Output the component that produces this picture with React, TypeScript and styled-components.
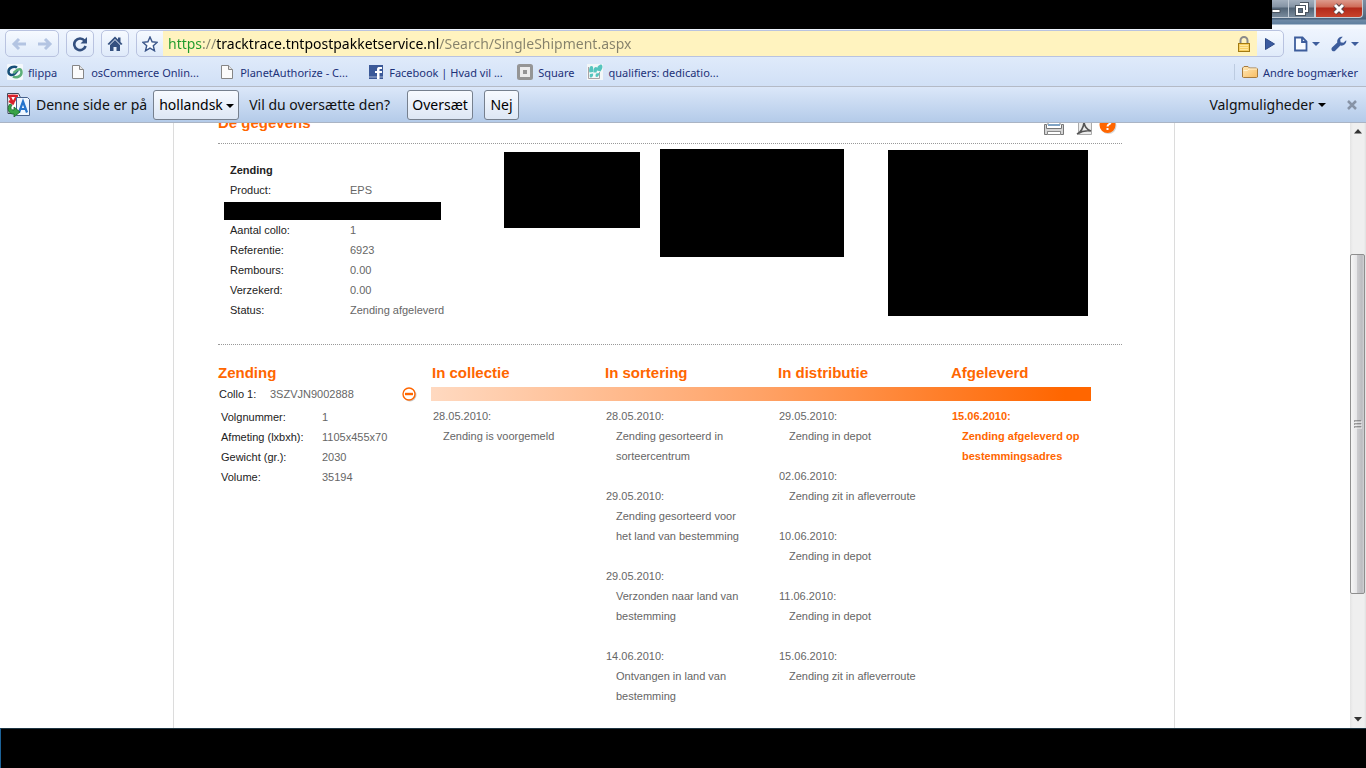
import React from "react";
import styled, { createGlobalStyle } from "styled-components";

const ui = `"Noto Sans", "Open Sans", sans-serif`;
const page = `"Liberation Sans", Arial, sans-serif`;

const Global = createGlobalStyle`
  * { box-sizing: border-box; }
  body { margin: 0; background: #fff; font-family: ${page}; }
  button, input, select { font: inherit; margin: 0; }
  h2, h3, ul, p { margin: 0; padding: 0; }
  ul { list-style: none; }
`;

const Window = styled.div`
  display: flex;
  flex-direction: column;
  min-height: 100vh;
`;

/* ---------- title strip ---------- */
const TitleStrip = styled.header`
  display: flex;
  flex-shrink: 0;
  height: 29px;
  background: #000;
`;
const TitleFill = styled.div`
  flex: 1;
`;
const Caption = styled.div`
  display: flex;
  align-items: flex-start;
  width: 94px;
  padding-right: 3px;
  background: linear-gradient(#7d8ea3 0, #5d7186 14px, #47617b 19px, #6f8aa6 20px, #5f7f9f 24px, #f3f8fe 25px);
`;
const CaptionButton = styled.button<{ $w: number; $close?: boolean }>`
  display: flex;
  align-items: center;
  justify-content: center;
  width: ${(p) => p.$w}px;
  height: 18px;
  padding: 0;
  border: 1px solid #c3ccd6;
  border-top: 0;
  border-left-width: ${(p) => (p.$close ? 1 : 0)}px;
  border-radius: 0 0 ${(p) => (p.$close ? 4 : 0)}px 0;
  background: ${(p) =>
    p.$close
      ? "linear-gradient(#dd9a8c 0, #cf6b58 7px, #b2291a 8px, #c8432c 17px)"
      : "linear-gradient(#a3afbd 0, #8493a4 7px, #516375 8px, #788a9c 17px)"};
`;

/* ---------- toolbar ---------- */
const Toolbar = styled.nav`
  display: flex;
  flex-shrink: 0;
  align-items: center;
  gap: 7px;
  height: 29px;
  padding: 0 8px 0 5px;
  background: linear-gradient(#eff5fe, #e0ebfa);
`;
const ButtonBox = styled.div`
  display: flex;
  height: 27px;
  border: 1px solid #b9c3e0;
  border-radius: 5px;
  background: linear-gradient(#f6faff, #dfeafa);
`;
const ToolButton = styled.button<{ $w?: number }>`
  display: flex;
  align-items: center;
  justify-content: center;
  gap: 4px;
  width: ${(p) => p.$w ?? 26}px;
  padding: 0;
  border: 0;
  background: none;
`;
const AddressBox = styled(ButtonBox)`
  flex: 1;
  overflow: hidden;
`;
const AddressField = styled.label`
  display: flex;
  flex: 1;
  align-items: center;
  padding: 0 6px 0 5px;
  background: #fff3bf;
`;
const AddressInput = styled.input`
  flex: 1;
  min-width: 0;
  height: 25px;
  padding: 0;
  border: 0;
  outline: 0;
  font-family: ${ui};
  font-size: 14px;
  color: transparent;
  background: linear-gradient(90deg, #1e9a2c 0 35px, #85816b 35px 48px, #000 48px 271px, #85816b 271px);
  background-clip: text;
  -webkit-background-clip: text;
`;
const MenuTools = styled.div`
  display: flex;
  gap: 12px;
  padding-left: 3px;
`;

/* ---------- bookmarks ---------- */
const Bookmarks = styled.nav`
  display: flex;
  flex-shrink: 0;
  align-items: center;
  gap: 13px;
  height: 28px;
  padding: 0 8px 0 7px;
  background: linear-gradient(#dfeafa, #d1e0f6);
  font-family: ${ui};
  font-size: 11px;
`;
const Bookmark = styled.a`
  display: flex;
  align-items: center;
  gap: 5px;
  color: #1c3178;
  text-decoration: none;
  white-space: nowrap;
`;
const BookmarkLabel = styled.span<{ $long?: boolean }>`
  min-width: ${(p) => (p.$long ? 115 : 0)}px;
`;
const OtherBookmarks = styled(Bookmark)`
  margin-left: auto;
  padding-left: 7px;
  border-left: 1px solid #bccbe0;
`;

/* ---------- translate bar ---------- */
const TranslateBar = styled.section`
  display: flex;
  flex-shrink: 0;
  align-items: center;
  height: 37px;
  padding: 0 8px 0 6px;
  border-top: 1px solid #b4bac6;
  border-bottom: 1px solid #aab4c4;
  background: linear-gradient(#dbe7f9, #b4cbe9);
  font-family: ${ui};
  font-size: 14px;
  color: #111;
  white-space: nowrap;
`;
const Prompt = styled.label`
  margin: 0 6px;
`;
const barControl = `
  height: 30px;
  border: 1px solid #76808e;
  border-radius: 3px;
  background: linear-gradient(#f7faff, #dde7f5);
  color: #000;
`;
const BarButton = styled.button<{ $w: number }>`
  ${barControl}
  width: ${(p) => p.$w}px;
  margin-left: 11px;
  padding: 0;
`;
const SelectWrap = styled.span`
  position: relative;
  display: flex;
  margin-right: 4px;
`;
const Language = styled.select`
  ${barControl}
  width: 86px;
  padding: 0 0 0 5px;
  appearance: none;
`;
const SelectArrow = styled.span`
  position: absolute;
  right: 5px;
  top: 14px;
  border: 4px solid transparent;
  border-top-color: #000;
  border-bottom: 0;
  pointer-events: none;
`;
const Options = styled.button`
  display: flex;
  align-items: center;
  gap: 4px;
  margin-left: auto;
  padding: 0;
  border: 0;
  background: none;
  color: #111;
`;
const Caret = styled.span<{ $color?: string }>`
  border: 4px solid transparent;
  border-top-color: ${(p) => p.$color ?? "#000"};
  border-bottom: 0;
`;
const Dismiss = styled.button`
  display: flex;
  margin-left: 20px;
  padding: 0;
  border: 0;
  background: none;
`;

/* ---------- page ---------- */
const Viewport = styled.div`
  display: flex;
  flex: 1;
  overflow: hidden;
`;
const Canvas = styled.div`
  flex: 1;
  padding-right: 2px;
  display: flex;
  justify-content: center;
`;
const Sheet = styled.main`
  width: 100%;
  max-width: 1002px;
  padding: 0 52px 0 44px;
  border: solid #dcdcdc;
  border-width: 0 1px;
  font-size: 11px;
  line-height: 20px;
  color: #666;
`;
const SheetHead = styled.div`
  display: flex;
  justify-content: space-between;
  height: 21px;
  border-bottom: 1px dotted #999;
`;
const Heading = styled.h2`
  font-size: 15px;
  line-height: 20px;
  color: #f60;
`;
const ScrolledHeading = styled(Heading)`
  margin-top: -10px;
`;
const PhaseHeading = styled(Heading)`
  height: 20px;
`;
const Tools = styled.div`
  display: flex;
  gap: 6px;
  margin: -6px 5px 0 0;
`;
const ToolLink = styled.a`
  display: flex;
  align-items: flex-start;
  height: 20px;
`;
const Details = styled.section`
  display: flex;
  align-items: flex-start;
  height: 201px;
  padding-top: 5px;
  border-bottom: 1px dotted #999;
`;
const DataTable = styled.table<{ $label: number }>`
  border-collapse: collapse;
  text-align: left;
  th, td { padding: 0; height: 20px; }
  th { width: ${(p) => p.$label}px; font-weight: normal; color: #222; }
  caption { text-align: left; font-weight: bold; color: #222; }
`;
const ShipmentTable = styled(DataTable)`
  width: 268px;
  margin: 11px 0 0 12px;
`;
const Redacted = styled.div<{ $w: number; $h: number; $top?: number; $left?: number }>`
  width: ${(p) => p.$w}px;
  height: ${(p) => p.$h}px;
  margin: ${(p) => p.$top ?? 0}px 0 0 ${(p) => p.$left ?? 0}px;
  background: #000;
`;
const Progress = styled.section`
  display: flex;
  gap: 14px;
  padding-top: 18px;
`;
const Collo = styled.div`
  width: 199px;
`;
const ColloRow = styled.div`
  display: flex;
  align-items: center;
  height: 22px;
  color: #666;
`;
const ColloLabel = styled.span`
  width: 52px;
  padding-left: 1px;
  color: #222;
`;
const Toggle = styled.button`
  display: flex;
  margin-left: auto;
  padding: 0;
  border: 0;
  background: none;
`;
const ColloTable = styled(DataTable)`
  margin: 2px 0 0 3px;
`;
const Phases = styled.div`
  display: grid;
  grid-template-columns: repeat(4, 173px);
  grid-template-rows: auto 14px auto;
  width: 660px;
`;
const PhaseTitle = styled(Heading)`
  height: 24px;
  padding-left: 1px;
`;
const Bar = styled.div`
  grid-column: 1 / -1;
  width: 660px;
  background: linear-gradient(90deg, #ffd9c0, #ffa266 50%, #f60 96%);
`;
const Events = styled.ul<{ $done?: boolean }>`
  padding: 5px 0 0 2px;
  color: ${(p) => (p.$done ? "#f60" : "#666")};
  font-weight: ${(p) => (p.$done ? "bold" : "normal")};
`;
const Event = styled.li`
  margin-bottom: 20px;
`;
const EventText = styled.p`
  width: 146px;
  padding-left: 10px;
`;

/* ---------- scrollbar ---------- */
const Scrollbar = styled.div`
  display: flex;
  flex-direction: column;
  width: 16px;
  background: linear-gradient(90deg, #e4e4e4, #efefef 3px, #efefef 14px, #e0e0e0);
`;
const ScrollArrow = styled.button`
  display: flex;
  align-items: center;
  justify-content: center;
  height: 17px;
  padding: 0;
  border: 0;
  background: none;
`;
const Gap = styled.div<{ $grow: number }>`
  flex: ${(p) => p.$grow} 1 0;
`;
const Thumb = styled.div`
  display: flex;
  flex: 340 1 0;
  align-items: center;
  justify-content: center;
  width: 15px;
  border: 1px solid #8e8e8e;
  border-radius: 2px;
  background: linear-gradient(90deg, #f6f6f6, #e6e6e8 45%, #cbcbce 50%, #bcbcc0 85%, #d4d4d6);
`;

const Taskbar = styled.footer`
  flex-shrink: 0;
  height: 40px;
  border-top: 1px solid #1d3442;
  border-left: 1px solid #1c6298;
  background: #000;
`;

const RedactedRow = styled.div`
  width: 217px;
  height: 18px;
  margin: 2px 0 0 -6px;
  background: #000;
`;

const PageIcon = () => (
  <svg width="16" height="16" viewBox="0 0 16 16" aria-hidden="true">
    <path d="M2.500 1.500h7l4 4v9h-11z" fill="#fbfbfb" stroke="#868686" />
    <path d="M9.500 1.500v4h4" fill="#e4e4e4" stroke="#868686" />
  </svg>
);

const FlippaIcon = () => (
  <svg width="16" height="16" viewBox="0 0 16 16" aria-hidden="true">
    <rect width="16" height="16" rx="1" fill="#f4f8fc" />
    <path d="M10 3.500C7 1.500 1.500 3.500 1.500 7.500S6 12 8 9.500L11 6" fill="none" stroke="#164f78" strokeWidth="2.500" />
    <path d="M6 12.500c3 2 8.500 0 8.500-4S11.500 4.500 9.500 6.500L6.500 9" fill="none" stroke="#5cae78" strokeWidth="2.500" />
  </svg>
);

const FacebookIcon = () => (
  <svg width="16" height="16" viewBox="0 0 16 16" aria-hidden="true">
    <rect x="1" y="1" width="14" height="14" fill="#3b5998" />
    <path d="M1 12h14v2H1z" fill="#7187b5" />
    <path d="M9 15V9H7V7h2V5.500C9 3.500 10 3 11.500 3H14v2h-1.500C11.500 5 11.500 5.300 11.500 6v1H14v2h-2.500v6z" fill="#fff" />
  </svg>
);

const SquareIcon = () => (
  <svg width="16" height="16" viewBox="0 0 16 16" aria-hidden="true">
    <rect x="1.500" y="1.500" width="13" height="13" rx="1" fill="#ececec" stroke="#959595" strokeWidth="3" />
    <rect x="6" y="6" width="4" height="4" fill="#959595" />
  </svg>
);

const SneakerIcon = () => (
  <svg width="16" height="16" viewBox="0 0 16 16" aria-hidden="true">
    <rect width="16" height="16" fill="#f3f7f8" />
    <path d="M1.500 3v11.500h11V8" stroke="#a9a3a6" fill="none" />
    <path d="M4.500 2C2.500 2 1.500 6 2.500 8.500l3.500-.5C6 6 7 2 4.500 2zM9 3C7 3 6 6 6.500 8.500l3 0C10 6.500 11 3 9 3zM3 10l3-.5c.5 2-.5 4-2 4s-1.500-2-1-3.500zM14.500.5c-3 0-5 3-4.500 6l3.500 1c1.500-2 3-5 1-7zM9 9.500l3.500-.5c0 2-1.500 4-3 4s-1-2-.5-3.500z" fill="#56c5be" />
  </svg>
);

const FolderIcon = () => (
  <svg width="16" height="16" viewBox="0 0 16 16" aria-hidden="true">
    <defs>
      <linearGradient id="folder" x1="0" y1="0" x2="1" y2="1">
        <stop offset="0" stopColor="#ffe9b8" />
        <stop offset="1" stopColor="#f8bc62" />
      </linearGradient>
    </defs>
    <path d="M.5 13V4L2 2.500h4L7.500 4h7l1 1v8l-1 .5h-13z" fill="url(#folder)" stroke="#a67a3e" />
    <path d="M1.500 6.500h4L7 5h8" fill="none" stroke="#fff2d2" />
  </svg>
);

const TranslateIcon = () => (
  <svg width="24" height="24" viewBox="0 0 24 24" aria-hidden="true">
    <path d="M1.500.5h11l1.500 3v12l-2 5H2z" fill="#fff" stroke="#3d4658" />
    <path d="M2 3c4-.5 6-.5 10 0M4 4l3 6 4-7M3 8l5 3" fill="none" stroke="#d8202a" strokeWidth="2.400" />
    <path d="M10.500 4.500h11l2 2v16h-13z" fill="#eef6ff" stroke="#46618d" />
    <path d="M13 19.500l4-11 4 11M14.500 16h5" fill="none" stroke="#2574cc" strokeWidth="2.200" />
    <path d="M4 11c-4 4-1 11 4 10v3l6-5-6-5v3c-3 0-4-2-2-5z" fill="#38a346" stroke="#14642a" strokeWidth=".8" />
  </svg>
);

type PhaseEvent = [date: string, text: string];
const phases: { title: string; done?: boolean; events: PhaseEvent[] }[] = [
  { title: "In collectie", events: [["28.05.2010:", "Zending is voorgemeld"]] },
  {
    title: "In sortering",
    events: [
      ["28.05.2010:", "Zending gesorteerd in sorteercentrum"],
      ["29.05.2010:", "Zending gesorteerd voor het land van bestemming"],
      ["29.05.2010:", "Verzonden naar land van bestemming"],
      ["14.06.2010:", "Ontvangen in land van bestemming"],
    ],
  },
  {
    title: "In distributie",
    events: [
      ["29.05.2010:", "Zending in depot"],
      ["02.06.2010:", "Zending zit in afleverroute"],
      ["10.06.2010:", "Zending in depot"],
      ["11.06.2010:", "Zending in depot"],
      ["15.06.2010:", "Zending zit in afleverroute"],
    ],
  },
  { title: "Afgeleverd", done: true, events: [["15.06.2010:", "Zending afgeleverd op bestemmingsadres"]] },
];

const shipmentRest = [
  ["Aantal collo:", "1"],
  ["Referentie:", "6923"],
  ["Rembours:", "0.00"],
  ["Verzekerd:", "0.00"],
  ["Status:", "Zending afgeleverd"],
];

const colloRows = [
  ["Volgnummer:", "1"],
  ["Afmeting (lxbxh):", "1105x455x70"],
  ["Gewicht (gr.):", "2030"],
  ["Volume:", "35194"],
];

const bookmarks = [
  { icon: <FlippaIcon />, label: "flippa" },
  { icon: <PageIcon />, label: "osCommerce Onlin...", long: true },
  { icon: <PageIcon />, label: "PlanetAuthorize - C...", long: true },
  { icon: <FacebookIcon />, label: "Facebook | Hvad vil ...", long: true },
  { icon: <SquareIcon />, label: "Square" },
  { icon: <SneakerIcon />, label: "qualifiers: dedicatio...", long: true },
];

const Row = ({ label, value }: { label: string; value: string }) => (
  <tr>
    <th scope="row">{label}</th>
    <td>{value}</td>
  </tr>
);

export default function App() {
  return (
    <Window>
      <Global />
      <TitleStrip>
        <TitleFill />
        <Caption>
          <CaptionButton $w={17} aria-label="Minimer">
            <svg width="16" height="12" viewBox="0 0 16 12"><path d="M0 6.500h8v3H0z" fill="#fff" stroke="#4b5560" /></svg>
          </CaptionButton>
          <CaptionButton $w={26} aria-label="Gendan">
            <svg width="14" height="14" viewBox="0 0 14 14" fill="none">
              <path d="M5 2h7v7h-2M2 5h7v7H2z" stroke="#4b5560" strokeWidth="4" />
              <path d="M5 2h7v7h-2M2 5h7v7H2z" stroke="#fff" strokeWidth="2" />
            </svg>
          </CaptionButton>
          <CaptionButton $w={48} $close aria-label="Luk">
            <svg width="14" height="12" viewBox="0 0 14 12" fill="none">
              <path d="M3 2l8 8M11 2l-8 8" stroke="#5b4548" strokeWidth="5" />
              <path d="M3 2l8 8M11 2l-8 8" stroke="#fff" strokeWidth="3" />
            </svg>
          </CaptionButton>
        </Caption>
      </TitleStrip>

      <Toolbar>
        <ButtonBox>
          <ToolButton aria-label="Tilbage">
            <svg width="16" height="14" viewBox="0 0 16 14"><path d="M15 7H3M8 2L3 7l5 5" fill="none" stroke="#b3c4e2" strokeWidth="3" /></svg>
          </ToolButton>
          <ToolButton aria-label="Frem">
            <svg width="16" height="14" viewBox="0 0 16 14"><path d="M1 7h12M8 2l5 5-5 5" fill="none" stroke="#b3c4e2" strokeWidth="3" /></svg>
          </ToolButton>
        </ButtonBox>
        <ButtonBox>
          <ToolButton aria-label="Genindlæs">
            <svg width="16" height="16" viewBox="0 0 16 16">
              <path d="M12.500 4.500A5.800 5.800 0 1 0 13.600 10" fill="none" stroke="#34507f" strokeWidth="2.600" />
              <path d="M15 1v6.500H8.500z" fill="#34507f" />
            </svg>
          </ToolButton>
        </ButtonBox>
        <ButtonBox>
          <ToolButton aria-label="Startside">
            <svg width="16" height="16" viewBox="0 0 16 16">
              <path d="M8 .5L.5 8 2 9l6-6 6 6 1.500-1L13.500 6V1.500H11V3.500z" fill="#34507f" />
              <path d="M3 9l5-5 5 5v6H9.500v-4h-3v4H3z" fill="#34507f" />
            </svg>
          </ToolButton>
        </ButtonBox>
        <AddressBox>
          <ToolButton aria-label="Tilføj bogmærke">
            <svg width="16" height="16" viewBox="0 0 16 16"><path d="M8 1l2.100 4.800 5.100.5-3.900 3.400 1.200 5.100L8 12.100l-4.500 2.700 1.200-5.100L.8 6.300l5.100-.5z" fill="#f8fbff" stroke="#3c578b" strokeWidth="1.400" /></svg>
          </ToolButton>
          <AddressField>
            <AddressInput aria-label="Adresse" defaultValue="https://tracktrace.tntpostpakketservice.nl/Search/SingleShipment.aspx" />
            <svg width="14" height="16" viewBox="0 0 14 16" aria-hidden="true">
              <path d="M3.500 8V4.500a3.500 3.500 0 0 1 7 0V8" fill="none" stroke="#8a8a8a" strokeWidth="2" />
              <rect x="1.500" y="7.500" width="11" height="8" fill="#f7cf63" stroke="#a37a10" />
              <path d="M3 9.500h8M3 11.500h8M3 13.500h8" stroke="#ffe9a0" />
            </svg>
          </AddressField>
          <ToolButton aria-label="Gå til">
            <svg width="12" height="12" viewBox="0 0 12 12"><path d="M1.500.5l9 5.500-9 5.500z" fill="#3b5ba0" stroke="#2f4b87" /></svg>
          </ToolButton>
        </AddressBox>
        <MenuTools>
          <ToolButton aria-label="Side">
            <svg width="14" height="16" viewBox="0 0 14 16"><path d="M1 1.500h7.500l4 4v9H1zM8 1.500v4.500h4.500" fill="#f8fbff" stroke="#3d5d9c" strokeWidth="1.800" /></svg>
            <Caret $color="#3d5d9c" />
          </ToolButton>
          <ToolButton aria-label="Værktøj">
            <svg width="16" height="16" viewBox="0 0 16 16" style={{ flexShrink: 0 }}>
              <path d="M11.800.8C8.500 0 5.600 3 6.300 6.600L1 11.600c-1.800 2 1.200 5 3.200 3.200l5.200-5.200c3.500.6 6.400-2 5.800-5.400L12.400 6.800 9.600 6.300 9.200 3.400z" fill="#3d5d9c" />
            </svg>
            <Caret $color="#3d5d9c" />
          </ToolButton>
        </MenuTools>
      </Toolbar>

      <Bookmarks>
        {bookmarks.map((b) => (
          <Bookmark href="#" key={b.label}>
            {b.icon}
            <BookmarkLabel $long={b.long}>{b.label}</BookmarkLabel>
          </Bookmark>
        ))}
        <OtherBookmarks href="#">
          <FolderIcon />
          <BookmarkLabel>Andre bogmærker</BookmarkLabel>
        </OtherBookmarks>
      </Bookmarks>

      <TranslateBar>
        <TranslateIcon />
        <Prompt htmlFor="language">Denne side er på</Prompt>
        <SelectWrap>
          <Language id="language" defaultValue="hollandsk">
            <option>hollandsk</option>
          </Language>
          <SelectArrow />
        </SelectWrap>
        <Prompt as="span">Vil du oversætte den?</Prompt>
        <BarButton $w={66}>Oversæt</BarButton>
        <BarButton $w={35}>Nej</BarButton>
        <Options>
          Valgmuligheder
          <Caret />
        </Options>
        <Dismiss aria-label="Luk linjen">
          <svg width="12" height="12" viewBox="0 0 12 12"><path d="M2 2l8 8M10 2l-8 8" stroke="#8793a6" strokeWidth="2.500" /></svg>
        </Dismiss>
      </TranslateBar>

      <Viewport>
        <Canvas>
          <Sheet>
            <SheetHead>
              <ScrolledHeading>De gegevens</ScrolledHeading>
              <Tools>
                <ToolLink href="#" aria-label="Afdrukken">
                  <svg width="26" height="20" viewBox="0 0 26 20">
                    <path d="M5 1h12v7H5z" fill="#fff" stroke="#888" />
                    <path d="M5 8h12" stroke="#7fa3c4" strokeWidth="2" />
                    <path d="M1.500 7.500v10h3v-3h13v3h3v-10h-2v4h-15v-4z" fill="#d4d4d4" stroke="#777" />
                    <path d="M4.500 14.500h13v3h-13z" fill="#fff" stroke="#888" />
                  </svg>
                </ToolLink>
                <ToolLink href="#" aria-label="PDF">
                  <svg width="18" height="20" viewBox="0 0 18 20">
                    <path d="M3.500.5h13v17h-13z" fill="#ececec" stroke="#aaa" />
                    <path d="M2 17c3-1 7-6 7-13 0 5 3 9 7 10-5-1-9 0-14 3z" fill="none" stroke="#555" strokeWidth="1.600" />
                  </svg>
                </ToolLink>
                <ToolLink href="#" aria-label="Help">
                  <svg width="18" height="20" viewBox="0 0 18 20">
                    <circle cx="9.500" cy="9" r="8" fill="#d8d8d8" />
                    <circle cx="8.500" cy="8" r="8" fill="#f60" />
                    <path d="M6 5.500c0-3 5.500-3 5.500 0 0 2-3 1.500-3 4" fill="none" stroke="#fff" strokeWidth="2" />
                    <path d="M7.500 11h2v2h-2z" fill="#fff" />
                  </svg>
                </ToolLink>
              </Tools>
            </SheetHead>

            <Details>
              <ShipmentTable $label={120}>
                <caption>Zending</caption>
                <tbody>
                  <Row label="Product:" value="EPS" />
                  <tr>
                    <td colSpan={2}>
                      <RedactedRow />
                    </td>
                  </tr>
                  {shipmentRest.map(([l, v]) => (
                    <Row key={l} label={l} value={v} />
                  ))}
                </tbody>
              </ShipmentTable>
              <Redacted $w={136} $h={76} $top={3} $left={6} />
              <Redacted $w={184} $h={108} $left={20} />
              <Redacted $w={200} $h={166} $top={1} $left={44} />
            </Details>

            <Progress>
              <Collo>
                <PhaseHeading>Zending</PhaseHeading>
                <ColloRow>
                  <ColloLabel>Collo 1:</ColloLabel>
                  3SZVJN9002888
                  <Toggle aria-label="Inklappen">
                    <svg width="16" height="16" viewBox="0 0 16 16">
                      <circle cx="9" cy="9" r="6.500" fill="#ccc" />
                      <circle cx="8" cy="8" r="6" fill="#fff" stroke="#f60" strokeWidth="1.400" />
                      <path d="M4 8h8" stroke="#f60" strokeWidth="2.400" />
                    </svg>
                  </Toggle>
                </ColloRow>
                <ColloTable $label={101}>
                  <tbody>
                    {colloRows.map(([l, v]) => (
                      <Row key={l} label={l} value={v} />
                    ))}
                  </tbody>
                </ColloTable>
              </Collo>
              <Phases>
                {phases.map((p) => (
                  <PhaseTitle key={p.title}>{p.title}</PhaseTitle>
                ))}
                <Bar />
                {phases.map((p) => (
                  <Events key={p.title} $done={p.done}>
                    {p.events.map(([date, text], i) => (
                      <Event key={i}>
                        <time>{date}</time>
                        <EventText>{text}</EventText>
                      </Event>
                    ))}
                  </Events>
                ))}
              </Phases>
            </Progress>
          </Sheet>
        </Canvas>
        <Scrollbar>
          <ScrollArrow aria-label="Rul op">
            <svg width="8" height="5" viewBox="0 0 8 5"><path d="M4 0l4 4.500H0z" fill="#333" /></svg>
          </ScrollArrow>
          <Gap $grow={114} />
          <Thumb>
            <svg width="8" height="9" viewBox="0 0 8 9"><path d="M0 1h7M0 4h7M0 7h7" stroke="#555" /><path d="M1 2h7M1 5h7M1 8h7" stroke="#f4f4f4" /></svg>
          </Thumb>
          <Gap $grow={117} />
          <ScrollArrow aria-label="Rul ned">
            <svg width="8" height="5" viewBox="0 0 8 5"><path d="M4 4.500L0 0h8z" fill="#333" /></svg>
          </ScrollArrow>
        </Scrollbar>
      </Viewport>
      <Taskbar />
    </Window>
  );
}
